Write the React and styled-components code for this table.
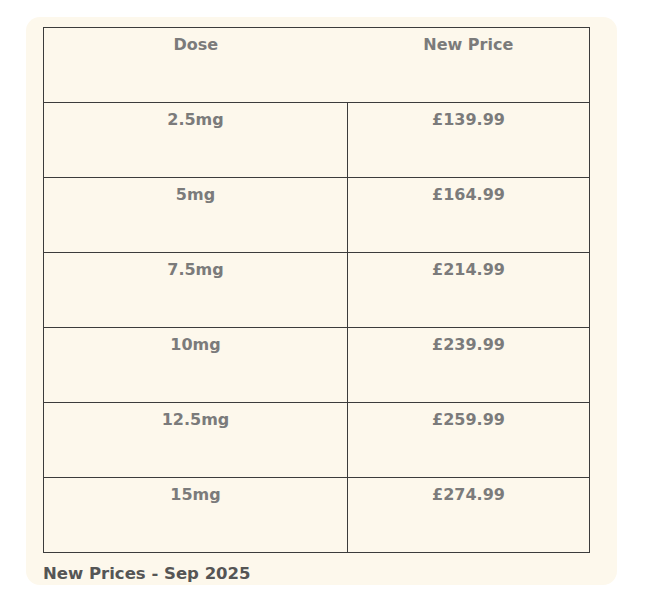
import React from 'react';
import styled, { createGlobalStyle } from 'styled-components';

const GlobalStyle = createGlobalStyle`
  body {
    margin: 0;
    background: #ffffff;
    font-family: "DejaVu Sans", "Noto Sans", sans-serif;
  }
`;

const Card = styled.div`
  box-sizing: border-box;
  margin: 17px 0 0 26px;
  width: 591px;
  height: 568px;
  padding: 10px 28px 0 17px;
  background: #fdf8ec;
  border-radius: 14px;
`;

const Table = styled.table`
  width: 546px;
  border-collapse: collapse;
  table-layout: fixed;
  border: 1px solid #3c3c3c;
`;

const Col = styled.col`
  width: ${(props) => props.w}px;
`;

const HeadCell = styled.th`
  height: 75px;
  box-sizing: border-box;
  padding: 5px 0 0;
  vertical-align: top;
  text-align: center;
  font-size: 16px;
  line-height: 24px;
  font-weight: 700;
  color: #7b7b7b;
  border-bottom: 1px solid #3c3c3c;
`;

const Cell = styled.td`
  height: 75px;
  box-sizing: border-box;
  padding: 5px 0 0;
  vertical-align: top;
  text-align: center;
  font-size: 16px;
  line-height: 24px;
  font-weight: 700;
  color: #7b7b7b;
  border: 1px solid #3c3c3c;
`;

const Footer = styled.p`
  margin: 11px 0 0;
  font-size: 16.5px;
  font-weight: 700;
  color: #555555;
`;

const rows = [
  ['2.5mg', '£139.99'],
  ['5mg', '£164.99'],
  ['7.5mg', '£214.99'],
  ['10mg', '£239.99'],
  ['12.5mg', '£259.99'],
  ['15mg', '£274.99'],
];

const App = () => (
  <>
    <GlobalStyle />
    <Card>
      <Table>
        <colgroup>
          <Col w={304} />
          <Col w={242} />
        </colgroup>
        <thead>
          <tr>
            <HeadCell>Dose</HeadCell>
            <HeadCell>New Price</HeadCell>
          </tr>
        </thead>
        <tbody>
          {rows.map(([dose, price]) => (
            <tr key={dose}>
              <Cell>{dose}</Cell>
              <Cell>{price}</Cell>
            </tr>
          ))}
        </tbody>
      </Table>
      <Footer>New Prices - Sep 2025</Footer>
    </Card>
  </>
);

export default App;
